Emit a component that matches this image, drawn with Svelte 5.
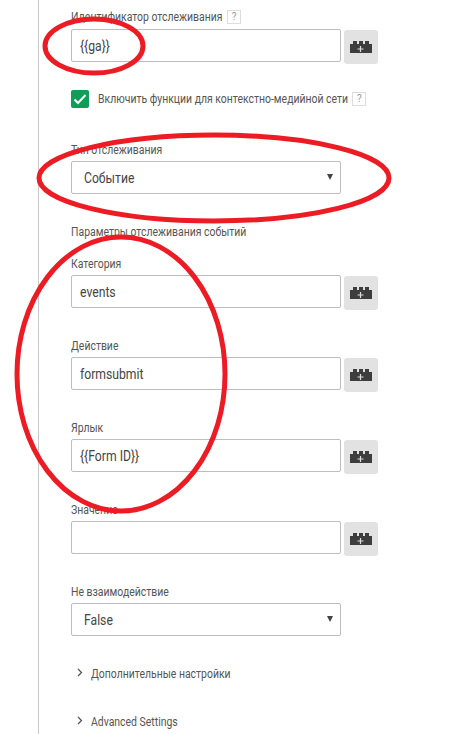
<script>
	const events = [
		{ label: 'Категория', value: 'events' },
		{ label: 'Действие', value: 'formsubmit' },
		{ label: 'Ярлык', value: '{{Form ID}}' },
		{ label: 'Значение', value: '' }
	];
</script>

{#snippet brick()}
	<button class="var-btn" type="button" aria-label="Выбрать переменную">
		<svg width="22" height="12" viewBox="0 0 22 12">
			<path d="M0 3h3V0h4v3h2V0h4v3h2V0h4v3h3v9H0z" fill="#3d3d3d" />
			<path d="M10.5 5v6M7.5 8h6" stroke="#ddd" stroke-width="1.2" />
		</svg>
	</button>
{/snippet}

{#snippet help()}
	<span class="help">?</span>
{/snippet}

{#snippet chevron()}
	<svg class="chev" width="6" height="9" viewBox="0 0 6 9">
		<path d="M1 1l3.5 3.5L1 8" fill="none" stroke="#555" stroke-width="1.3" />
	</svg>
{/snippet}

<main class="page">
	<div class="form">
		<section class="field first">
			<div class="label"><span class="tx">Идентификатор отслеживания</span>{@render help()}</div>
			<div class="row">
				<div class="input"><span class="tx">{'{{ga}}'}</span></div>
				{@render brick()}
			</div>
		</section>

		<div class="check-row">
			<span class="check">
				<svg width="14" height="12" viewBox="0 0 14 12">
					<path d="M1.5 6.5l3.5 3.5 7.5-8" fill="none" stroke="#fff" stroke-width="2" />
				</svg>
			</span>
			<span class="check-text tx">Включить функции для контекстно-медийной сети</span>
			{@render help()}
		</div>

		<section class="field type">
			<div class="label"><span class="tx">Тип отслеживания</span></div>
			<div class="select"><span class="tx">Событие</span><span class="caret"></span></div>
		</section>

		<div class="label group"><span class="tx">Параметры отслеживания событий</span></div>

		{#each events as item}
			<section class="field event">
				<div class="label"><span class="tx">{item.label}</span></div>
				<div class="row">
					<div class="input"><span class="tx">{item.value}</span></div>
					{@render brick()}
				</div>
			</section>
		{/each}

		<section class="field nonint">
			<div class="label"><span class="tx">Не взаимодействие</span></div>
			<div class="select"><span class="tx">False</span><span class="caret"></span></div>
		</section>

		<div class="toggle first-toggle">{@render chevron()}<span class="tx">Дополнительные настройки</span></div>
		<div class="toggle second-toggle">{@render chevron()}<span class="tx">Advanced Settings</span></div>
	</div>

	<svg class="marks" width="473" height="734" viewBox="0 0 473 734">
		<ellipse cx="94" cy="46" rx="49" ry="27" />
		<ellipse cx="214" cy="178" rx="175" ry="43" />
		<ellipse cx="121" cy="374" rx="104" ry="137" />
	</svg>
</main>

<style>
	:global(body) {
		margin: 0;
		background: #fff;
	}

	.page {
		position: relative;
		width: 473px;
		height: 734px;
		overflow: hidden;
		font-family: Roboto, sans-serif;
		color: #444;
	}

	.form {
		box-sizing: border-box;
		height: 734px;
		margin-left: 38px;
		padding: 10px 0 0 32px;
		border-left: 1px solid #c8c8c8;
	}

	/* the source page renders Roboto noticeably narrower than it comes out here */
	.tx {
		display: inline-block;
		transform: scaleX(0.87);
		transform-origin: left center;
		white-space: nowrap;
	}

	.label {
		display: flex;
		height: 14px;
		font-size: 12px;
		line-height: 14px;
		color: #555;
	}

	.field .label {
		margin-bottom: 4px;
	}

	.first .label {
		margin-bottom: 5px;
	}

	.row {
		display: flex;
		gap: 3px;
		align-items: flex-start;
	}

	.input,
	.select {
		box-sizing: border-box;
		position: relative;
		width: 270px;
		height: 33px;
		padding-left: 8px;
		border: 1px solid #bdbdbd;
		border-radius: 2px;
		background: #fff;
		font-size: 14px;
		line-height: 33px;
		color: #444;
	}

	.select {
		padding-left: 12px;
	}

	.caret {
		position: absolute;
		right: 7px;
		top: 12px;
		border-left: 3px solid transparent;
		border-right: 3px solid transparent;
		border-top: 6px solid #444;
	}

	.var-btn {
		display: flex;
		align-items: center;
		justify-content: center;
		width: 34px;
		height: 34px;
		margin-top: 1px;
		padding: 0;
		border: 0;
		border-radius: 3px;
		background: #e2e2e2;
	}

	.help {
		display: inline-block;
		box-sizing: border-box;
		flex: none;
		width: 14px;
		height: 14px;
		border: 1px solid #ddd;
		font-size: 10px;
		line-height: 12px;
		text-align: center;
		color: #999;
	}

	.label .help {
		margin-left: -18px;
	}

	.check-row {
		display: flex;
		align-items: center;
		height: 18px;
		margin-top: 26px;
	}

	.check-row .help {
		margin-left: -33px;
	}

	.check {
		display: flex;
		align-items: center;
		justify-content: center;
		width: 18px;
		height: 18px;
		margin-right: 9px;
		border-radius: 2px;
		background: #0f9d58;
	}

	.check-text {
		font-size: 12px;
		color: #555;
	}

	.type {
		margin-top: 35px;
	}

	.group {
		margin-top: 31px;
	}

	.event {
		height: 82px;
	}

	.group + .event {
		margin-top: 18px;
	}

	.toggle {
		display: flex;
		align-items: center;
		gap: 8px;
		height: 14px;
		padding-left: 6px;
		font-size: 12px;
		line-height: 14px;
		color: #555;
	}

	.first-toggle {
		margin-top: 31px;
	}

	.second-toggle {
		margin-top: 34px;
	}

	.chev {
		margin-top: -4px;
	}

	/* hand-drawn red rings lying over the form */
	.marks {
		position: absolute;
		left: 0;
		top: 0;
		pointer-events: none;
	}

	.marks ellipse {
		fill: none;
		stroke: #ed1c24;
		stroke-width: 5;
	}
</style>
